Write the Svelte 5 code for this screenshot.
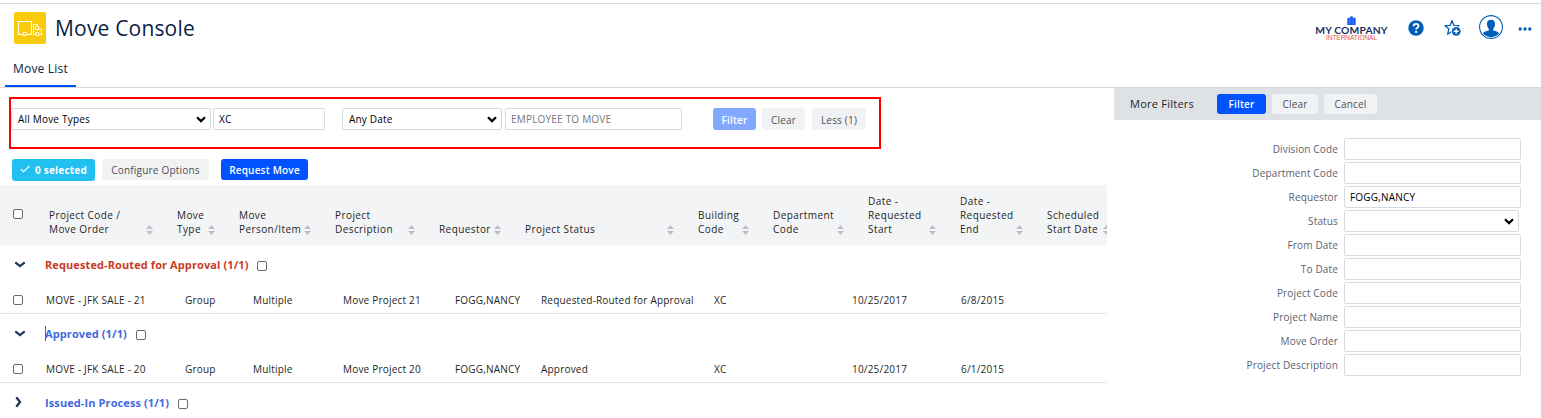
<script>
  const columns = [
    ['Project Code /', 'Move Order'],
    ['Move', 'Type'],
    ['Move', 'Person/Item'],
    ['Project', 'Description'],
    ['Requestor'],
    ['Project Status'],
    ['Building', 'Code'],
    ['Department', 'Code'],
    ['Date -', 'Requested', 'Start'],
    ['Date -', 'Requested', 'End'],
    ['Scheduled', 'Start Date']
  ];

  const groups = [
    {
      title: 'Requested-Routed for Approval (1/1)',
      tone: 'red',
      open: true,
      rows: [['MOVE - JFK SALE - 21', 'Group', 'Multiple', 'Move Project 21', 'FOGG,NANCY', 'Requested-Routed for Approval', 'XC', '10/25/2017', '6/8/2015']]
    },
    {
      title: 'Approved (1/1)',
      tone: 'blue',
      open: true,
      caret: true,
      rows: [['MOVE - JFK SALE - 20', 'Group', 'Multiple', 'Move Project 20', 'FOGG,NANCY', 'Approved', 'XC', '10/25/2017', '6/1/2015']]
    },
    { title: 'Issued-In Process (1/1)', tone: 'blue', open: false, rows: [] }
  ];

  const fields = [
    { label: 'Division Code', value: '' },
    { label: 'Department Code', value: '' },
    { label: 'Requestor', value: 'FOGG,NANCY' },
    { label: 'Status', select: true },
    { label: 'From Date', value: '' },
    { label: 'To Date', value: '' },
    { label: 'Project Code', value: '' },
    { label: 'Project Name', value: '' },
    { label: 'Move Order', value: '' },
    { label: 'Project Description', value: '' }
  ];
</script>

{#snippet chevron()}
  <svg class="chev" width="10" height="7" viewBox="0 0 10 7"><path d="M1 1.2 5 5.1 9 1.2" fill="none" stroke="currentColor" stroke-width="2.2" /></svg>
{/snippet}

<div class="page">
  <header class="top">
    <svg class="truck" width="32" height="32" viewBox="0 0 32 32">
      <rect width="32" height="32" rx="2.5" fill="#facb0c" />
      <g fill="none" stroke="#fffbe8" stroke-width="1.1">
        <path d="M8.800 22.500H4.500V9.500H17.500V22.500H12.700M19.500 22.500V12.500H23.300L25 16.500 27.500 18V22.500H25.200M19.500 22.500H21.300" />
        <path d="M21.500 14.500V17.500H25.500M21.500 14.500H23.500" />
        <circle cx="10.700" cy="22" r="1.800" /><circle cx="23.300" cy="22" r="1.800" />
      </g>
    </svg>
    <h1>Move Console</h1>
    <div class="brand">
      <svg width="9" height="9" viewBox="0 0 9 9"><path d="M.3 2.200Q1.500 1.200 2.900 2V.8Q4.500-.5 6.100.8V2Q7.500 1.200 8.700 2.200V9H.3Z" fill="#1c5ff5" /><path d="M3 2.500V8M6 2.500V8" stroke="#5c92ff" stroke-width=".6" /></svg>
      <span class="company">MY COMPANY</span>
      <span class="intl">INTERNATIONAL</span>
    </div>
    <svg class="help" width="16" height="16" viewBox="0 0 16 16">
      <circle cx="8" cy="8" r="7.700" fill="#005eb8" />
      <path d="M5.600 6.300C5.600 4.700 6.600 3.900 8.100 3.900S10.500 4.800 10.500 6.100C10.500 7.700 8.100 7.800 8.100 9.500" fill="none" stroke="#fff" stroke-width="1.800" />
      <circle cx="8.100" cy="11.900" r="1.150" fill="#fff" />
    </svg>
    <svg class="star" width="17" height="18" viewBox="0 0 17 18">
      <path d="M8 1.500 9.900 6.400 15 6.700 11.100 9.900 12.300 14.800 8 12.200 3.600 15.200 4.900 9.900 1 6.700 6.100 6.400Z" fill="none" stroke="#005eb8" stroke-width="1.300" stroke-linejoin="round" />
      <circle cx="12.200" cy="12.300" r="5.200" fill="#fff" /><circle cx="12.200" cy="12.300" r="4.400" fill="#005eb8" />
      <path d="M9.700 12.300H14.700M12.200 9.800V14.800" stroke="#fff" stroke-width="1.400" />
    </svg>
    <svg class="user" width="24" height="24" viewBox="0 0 24 24">
      <circle cx="12" cy="12" r="11.400" fill="#fff" stroke="#005eb8" stroke-width="1.100" />
      <path d="M12 4.700C9.300 4.700 7.900 6.300 8 8.700 8 11.200 8.700 12.700 9.800 13.800V15.400C7.200 16.100 4.900 16.700 3.900 18.200A10.300 10.300 0 0 0 20.100 18.200C19.100 16.700 16.800 16.100 14.200 15.400V13.800C15.300 12.700 16 11.200 16 8.700 16.100 6.300 14.700 4.700 12 4.700Z" fill="#005eb8" />
    </svg>
    <svg class="dots" width="14" height="4" viewBox="0 0 14 4"><g fill="#005eb8"><circle cx="2.200" cy="2" r="1.650" /><circle cx="7" cy="2" r="1.650" /><circle cx="11.800" cy="2" r="1.650" /></g></svg>
  </header>

  <nav><span class="tab">Move List</span></nav>

  <div class="body">
    <main>
      <section class="filters">
        <div class="select types">All Move Types{@render chevron()}</div>
        <input class="code" value="XC" />
        <div class="select date">Any Date{@render chevron()}</div>
        <input class="employee" placeholder="EMPLOYEE TO MOVE" />
        <button class="primary muted">Filter</button>
        <button class="clear">Clear</button>
        <button class="less">Less (1)</button>
      </section>

      <div class="actions">
        <button class="selected"><svg width="10" height="8" viewBox="0 0 10 8"><path d="M.7 4 3.500 6.800 9.400 1" fill="none" stroke="#d8f5fd" stroke-width="1.500" /></svg>0 selected</button>
        <button class="configure">Configure Options</button>
        <button class="primary request">Request Move</button>
      </div>

      <div class="thead">
        <div class="pick"><input type="checkbox" /></div>
        {#each columns as lines}
          <div class="th">
            <span>{#each lines as line, i}{#if i}<br />{/if}{line}{/each}</span>
            <svg width="7" height="10" viewBox="0 0 7 10"><path d="M3.500 0 7 4H0ZM3.500 10 7 6H0Z" fill="#bcc0c6" /></svg>
          </div>
        {/each}
      </div>

      {#each groups as group}
        <div class="group {group.tone}">
          <span class="toggle">
            {#if group.open}
              <svg width="12" height="7" viewBox="0 0 12 7"><path d="M1.300 1.300 6 5 10.700 1.300" fill="none" stroke="#1f3559" stroke-width="2.200" /></svg>
            {:else}
              <svg class="closed" width="7" height="12" viewBox="0 0 7 12"><path d="M1.300 1.300 5 6 1.300 10.700" fill="none" stroke="#1f3559" stroke-width="2.200" /></svg>
            {/if}
          </span>
          <span class="title" class:caret={group.caret}>{group.title}</span>
          <input type="checkbox" />
        </div>
        {#each group.rows as row}
          <div class="row">
            <div class="pick"><input type="checkbox" /></div>
            {#each row as cell}<span>{cell}</span>{/each}
          </div>
        {/each}
      {/each}
    </main>

    <aside>
      <div class="panel-head">
        <span>More Filters</span>
        <button class="primary">Filter</button>
        <button>Clear</button>
        <button>Cancel</button>
      </div>
      <div class="form">
        {#each fields as field}
          <div class="field">
            <span>{field.label}</span>
            {#if field.select}
              <div class="select status">{@render chevron()}</div>
            {:else}
              <input value={field.value} />
            {/if}
          </div>
        {/each}
      </div>
    </aside>
  </div>
</div>

<style>
  :global(body) { overflow: hidden; background: #fff; }
  * { box-sizing: border-box; }
  .page {
    width: 1541px;
    height: 418px;
    overflow: hidden;
    padding-top: 3px;
    font-family: "Open Sans", sans-serif;
    font-size: 10px;
    color: #1d1f24;
    white-space: nowrap;
  }
  svg { display: block; flex: none; }
  .top { display: flex; align-items: flex-start; height: 50px; border-top: 1px solid #d9d9d9; padding: 8px 0 0 14px; }
  h1 { margin: 2px auto 0 9px; font-size: 21px; line-height: 28px; font-weight: 400; letter-spacing: .18px; color: #0b1f45; }
  .brand { display: flex; flex-direction: column; align-items: center; width: 73px; margin: 4px 20px 0 0; }
  .company { font: 700 10.300px/10px Lato, sans-serif; letter-spacing: .15px; color: #1b2f5e; }
  .intl { font: 6.600px/6px "Liberation Sans", sans-serif; color: #dc5a4c; letter-spacing: -.1px; }
  .help { margin: 8px 20px 0 0; }
  .star { margin: 7px 18px 0 0; }
  .user { margin: 3px 15px 0 0; }
  .dots { margin: 15px 9px 0 0; }
  nav { height: 35px; border-bottom: 1px solid #d9d9d9; padding-left: 5px; display: flex; }
  .tab { width: 71px; height: 34px; padding: 7px 0 0 8px; border-bottom: 2px solid #0052ff; font-size: 12px; line-height: 18px; letter-spacing: .2px; color: #0b1f45; }
  .body { display: flex; }
  main { width: 1107px; overflow: hidden; }
  aside { margin-left: 7px; flex: 1; }

  .select, input:not([type='checkbox']) {
    height: 22px;
    border: 1px solid #d6dcde;
    border-radius: 2px;
    background: #fff;
    padding: 0 5px;
    font: 10px/20px "Open Sans", sans-serif;
    letter-spacing: .2px;
    color: #000;
    outline: none;
  }
  input::placeholder { color: #757575; opacity: 1; }
  .select { display: flex; align-items: center; justify-content: space-between; padding: 0 4px 0 6px; }
  .chev { margin-left: auto; }
  input[type='checkbox'] { appearance: none; width: 10px; height: 10px; margin: 0; border: 1px solid #6b6b6b; border-radius: 2px; background: #fff; }
  button {
    height: 20px;
    border: 0;
    border-radius: 3px;
    padding: 0;
    background: #f1f2f4;
    color: #4c4f55;
    font: 10px/20px "Open Sans", sans-serif;
    letter-spacing: .2px;
  }
  .primary { background: #0052ff; color: #fff; font-weight: 600; }
  .muted { background: #82a9ff; }

  .filters { display: flex; width: 872px; height: 52px; margin: 9px 0 0 9px; border: 2px solid #f00; padding-top: 9px; }
  .filters button { height: 22px; line-height: 22px; padding-top: 1px; }
  .types { width: 200px; }
  .code { width: 112px; margin-left: 2px; }
  .date { width: 160px; margin-left: 17px; }
  .employee { width: 177px; margin-left: 3px; }
  .muted { width: 43px; margin-left: 31px; }
  .clear { width: 43px; margin-left: 6px; }
  .less { width: 54px; margin-left: 7px; }
  .actions { display: flex; height: 36px; padding: 10px 0 0 12px; }
  .actions button { height: 21px; line-height: 21px; padding-top: 1px; }
  .actions .selected { width: 83px; height: 22px; padding-top: 0; display: flex; align-items: center; justify-content: center; gap: 5px; background: #20c0f0; color: #fff; font-weight: 700; }
  .selected svg { margin-top: -3px; }
  .configure { width: 107px; margin-left: 7px; }
  .request { width: 87px; margin-left: 12px; }

  .thead { display: grid; grid-template-columns: 49px 128px 62px 96px 104px 86px 173px 75px 95px 92px 87px 87px; width: 1134px; height: 60px; background: #f3f4f6; }
  .thead .pick { padding: 24px 0 0 13px; display: flex; }
  .th { display: flex; align-items: flex-end; justify-content: space-between; padding: 0 24px 9px 0; font-weight: 500; line-height: 14px; letter-spacing: .42px; }
  .th svg { margin-bottom: 1px; }
  .group { display: flex; align-items: center; height: 40px; font-size: 11px; }
  .group .toggle { width: 45px; padding-left: 14px; margin-top: -2px; }
  .closed { margin-left: 1px; }
  .group .title { font-weight: 700; letter-spacing: .1px; line-height: 15px; margin-top: -1px; }
  .group input { margin: 2px 0 0 8px !important; }
  .red .title { color: #cb3a26; }
  .blue .title { color: #3f6adf; }
  .caret { box-shadow: inset 1px 0 #2a62d8; }
  .blue input { margin-left: 9px !important; }
  .row { display: grid; grid-template-columns: 46px 139px 68px 90px 112px 86px 173px 138px 109px 1fr; align-items: center; height: 29px; padding-top: 2px; border-bottom: 1px solid #e2e3e5; letter-spacing: .2px; }
  .row .pick { padding-left: 13px; display: flex; }

  .panel-head { display: flex; align-items: center; height: 32px; background: #dfe2e5; padding-left: 16px; }
  .panel-head span { width: 87px; margin-top: -1px; font-size: 11px; letter-spacing: .25px; color: #23262d; }
  .panel-head button { width: 46px; margin-right: 6px; }
  .panel-head .primary { width: 49px; }
  .panel-head button:last-child { width: 53px; }
  .form { display: flex; flex-direction: column; gap: 2px; padding: 18px 20px 0 0; }
  .field { display: grid; grid-template-columns: 224px 177px; column-gap: 6px; align-items: center; color: #5c616e; letter-spacing: .15px; }
  .field span { text-align: right; line-height: 22px; height: 22px; }
  .status { width: 175px; }
</style>
